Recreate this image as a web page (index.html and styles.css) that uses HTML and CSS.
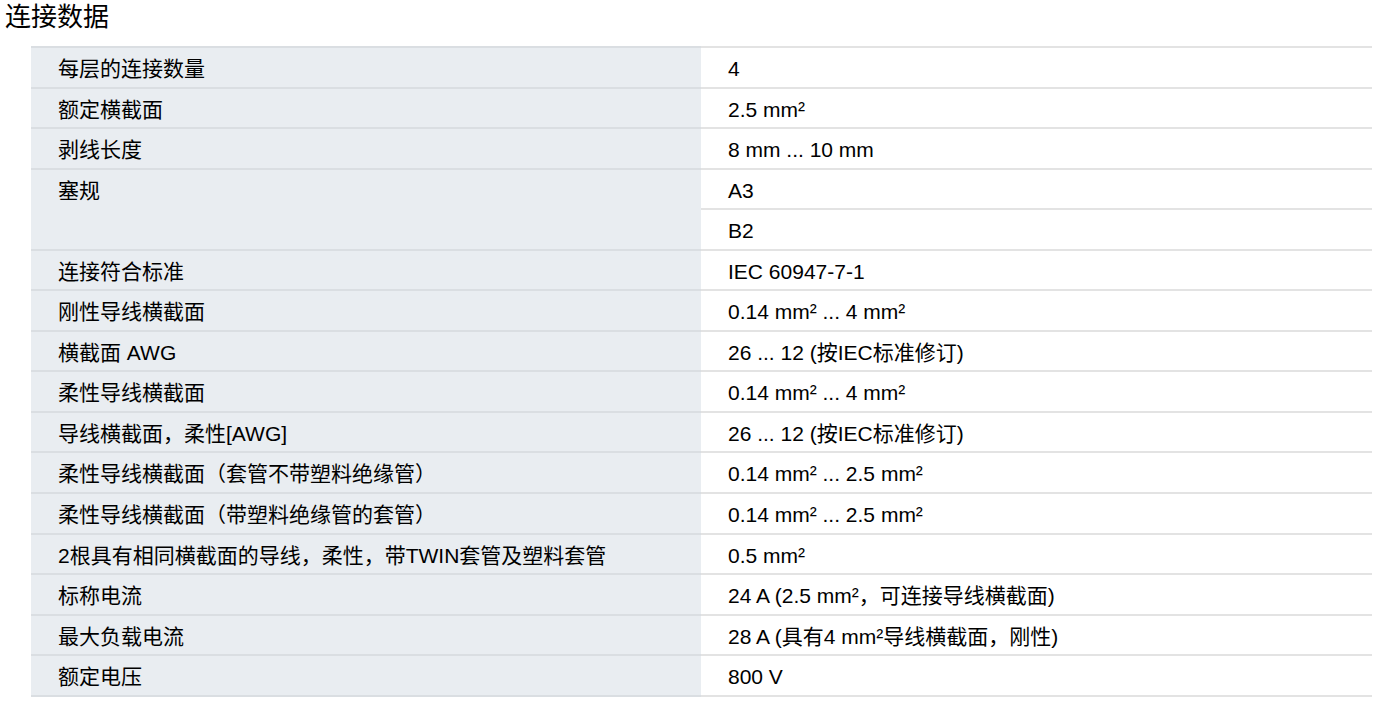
FILE: index.html
```html
<!DOCTYPE html>
<html lang="zh-CN">
<head>
<meta charset="utf-8">
<title>连接数据</title>
<link rel="stylesheet" href="styles.css">
</head>
<body>
<h2 class="title">连接数据</h2>
<table class="spec">
  <tbody>
    <tr><td class="label">每层的连接数量</td><td class="value">4</td></tr>
    <tr><td class="label">额定横截面</td><td class="value">2.5 mm²</td></tr>
    <tr><td class="label">剥线长度</td><td class="value">8 mm ... 10 mm</td></tr>
    <tr><td class="label" rowspan="2">塞规</td><td class="value">A3</td></tr>
    <tr><td class="value">B2</td></tr>
    <tr><td class="label">连接符合标准</td><td class="value">IEC 60947-7-1</td></tr>
    <tr><td class="label">刚性导线横截面</td><td class="value">0.14 mm² ... 4 mm²</td></tr>
    <tr><td class="label">横截面 AWG</td><td class="value">26 ... 12 (按IEC标准修订)</td></tr>
    <tr><td class="label">柔性导线横截面</td><td class="value">0.14 mm² ... 4 mm²</td></tr>
    <tr><td class="label">导线横截面，柔性[AWG]</td><td class="value">26 ... 12 (按IEC标准修订)</td></tr>
    <tr><td class="label">柔性导线横截面（套管不带塑料绝缘管）</td><td class="value">0.14 mm² ... 2.5 mm²</td></tr>
    <tr><td class="label">柔性导线横截面（带塑料绝缘管的套管）</td><td class="value">0.14 mm² ... 2.5 mm²</td></tr>
    <tr><td class="label">2根具有相同横截面的导线，柔性，带TWIN套管及塑料套管</td><td class="value">0.5 mm²</td></tr>
    <tr><td class="label">标称电流</td><td class="value">24 A (2.5 mm²，可连接导线横截面)</td></tr>
    <tr><td class="label">最大负载电流</td><td class="value">28 A (具有4 mm²导线横截面，刚性)</td></tr>
    <tr class="last"><td class="label">额定电压</td><td class="value">800 V</td></tr>
  </tbody>
</table>
</body>
</html>
```

FILE: styles.css
```css
html, body {
  margin: 0;
  padding: 0;
  background: #ffffff;
  color: #000000;
  font-family: "Liberation Sans", Arial, "Noto Sans CJK SC", sans-serif;
}

.title {
  margin: 0;
  padding: 1px 0 0 5px;
  height: 46px;
  box-sizing: border-box;
  font-size: 26px;
  font-weight: normal;
  line-height: 32px;
  color: #000000;
}

.spec {
  margin-left: 31px;
  width: 1341px;
  border-collapse: collapse;
  table-layout: fixed;
  font-size: 21px;
}

.spec td {
  height: 40.56px;
  padding: 9px 0 0 27px;
  box-sizing: border-box;
  vertical-align: top;
  border-top: 2px solid #e3e3e3;
  line-height: 24px;
  white-space: nowrap;
}

.spec .label {
  width: 670px;
  background: #e9edf1;
  border-top-color: #dadee2;
}

.spec .value {
  background: #ffffff;
}

.spec tr.last td {
  border-bottom: 2px solid #e3e3e3;
}

.spec tr.last td.label {
  border-bottom-color: #dadee2;
}
```
